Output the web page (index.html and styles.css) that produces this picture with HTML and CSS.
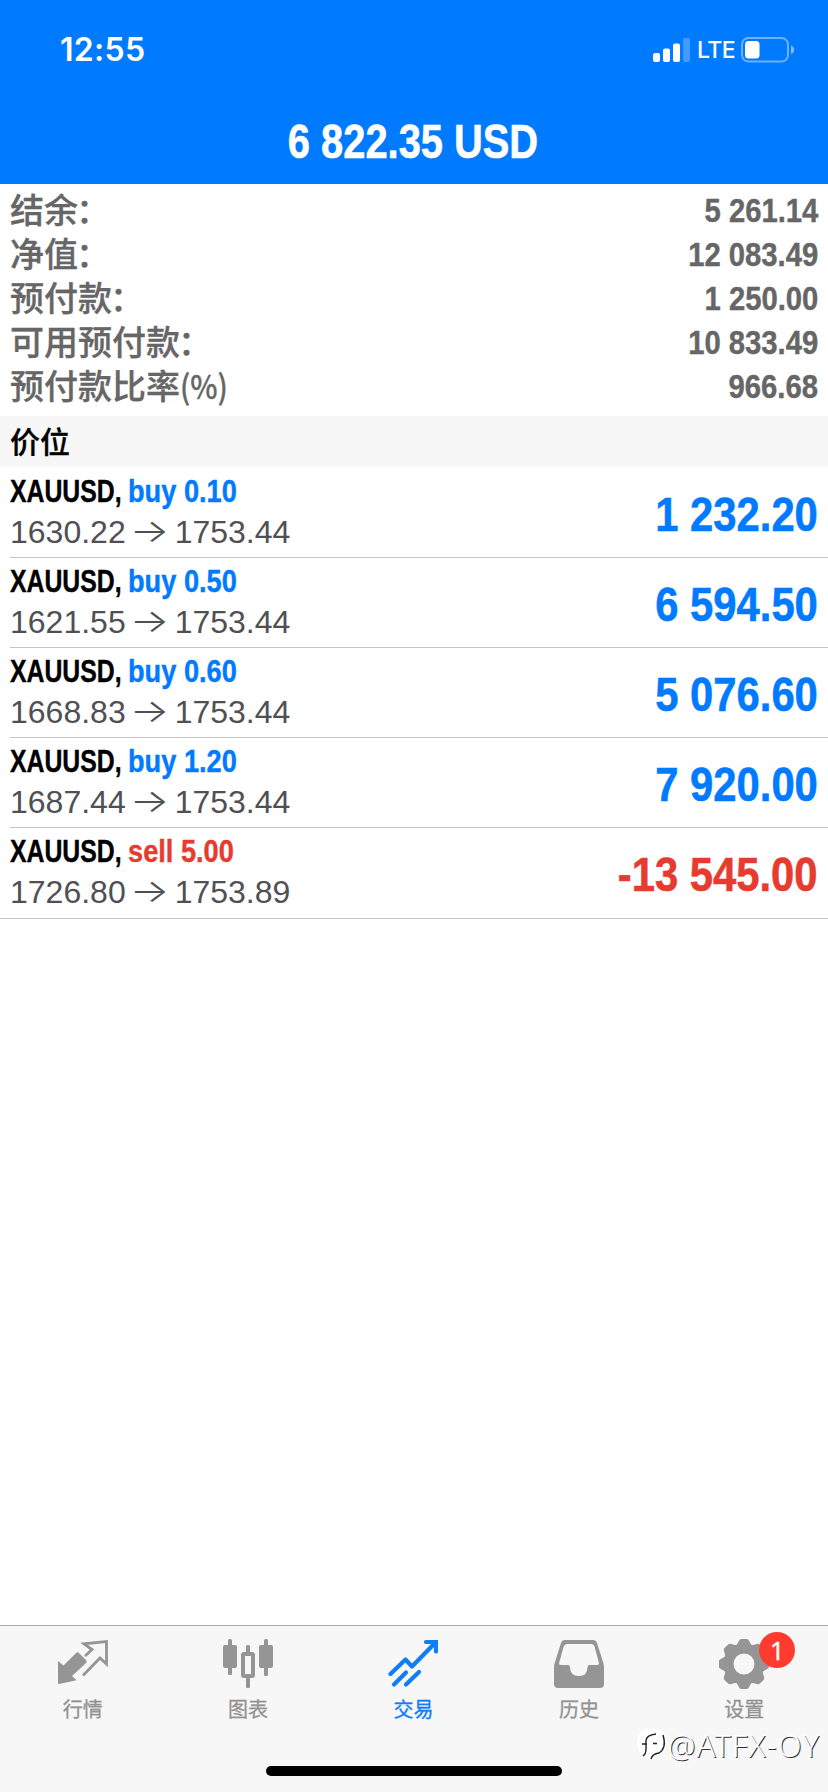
FILE: index.html
```html
<!DOCTYPE html>
<html lang="zh-CN">
<head>
<meta charset="utf-8">
<title>交易</title>
<link rel="stylesheet" href="styles.css">
</head>
<body>
<div class="screen">
  <header class="header">
    <div class="status">
      <span class="time">12:55</span>
      <div class="status-right">
        <svg class="signal" viewBox="0 0 38 24" width="38" height="24" fill="#fff">
          <rect x="0" y="15" width="7" height="9" rx="2"/>
          <rect x="10" y="10.500" width="7" height="13.500" rx="2"/>
          <rect x="20" y="5.500" width="7" height="18.500" rx="2"/>
          <rect x="30" y="0" width="7" height="24" rx="2" opacity=".25"/>
        </svg>
        <span class="lte">LTE</span>
        <svg class="battery" viewBox="0 0 54 26" width="54" height="26">
          <rect x="1" y="1" width="46" height="23.500" rx="6.500" fill="none" stroke="#fff" stroke-opacity=".42" stroke-width="2"/>
          <rect x="4" y="4" width="14.500" height="17.500" rx="3.500" fill="#fff"/>
          <path d="M50 8.500q3.200 1.200 3.200 4.300t-3.200 4.300z" fill="#fff" opacity=".5"/>
        </svg>
      </div>
    </div>
    <h1 class="title">6 822.35 USD</h1>
  </header>

  <dl class="summary">
    <div class="line"><dt>结余<span class="colon">：</span></dt><dd>5 261.14</dd></div>
    <div class="line"><dt>净值<span class="colon">：</span></dt><dd>12 083.49</dd></div>
    <div class="line"><dt>预付款<span class="colon">：</span></dt><dd>1 250.00</dd></div>
    <div class="line"><dt>可用预付款<span class="colon">：</span></dt><dd>10 833.49</dd></div>
    <div class="line"><dt>预付款比率<span class="paren">(%)</span></dt><dd>966.68</dd></div>
  </dl>

  <h2 class="section">价位</h2>

  <main class="positions">
    <div class="position">
      <div class="info">
        <div class="deal"><span class="symbol">XAUUSD,</span><span class="side buy">buy 0.10</span></div>
        <div class="prices"><span>1630.22</span><span class="arrow">→</span><span>1753.44</span></div>
      </div>
      <div class="profit buy">1 232.20</div>
    </div>
    <div class="position">
      <div class="info">
        <div class="deal"><span class="symbol">XAUUSD,</span><span class="side buy">buy 0.50</span></div>
        <div class="prices"><span>1621.55</span><span class="arrow">→</span><span>1753.44</span></div>
      </div>
      <div class="profit buy">6 594.50</div>
    </div>
    <div class="position">
      <div class="info">
        <div class="deal"><span class="symbol">XAUUSD,</span><span class="side buy">buy 0.60</span></div>
        <div class="prices"><span>1668.83</span><span class="arrow">→</span><span>1753.44</span></div>
      </div>
      <div class="profit buy">5 076.60</div>
    </div>
    <div class="position">
      <div class="info">
        <div class="deal"><span class="symbol">XAUUSD,</span><span class="side buy">buy 1.20</span></div>
        <div class="prices"><span>1687.44</span><span class="arrow">→</span><span>1753.44</span></div>
      </div>
      <div class="profit buy">7 920.00</div>
    </div>
    <div class="position">
      <div class="info">
        <div class="deal"><span class="symbol">XAUUSD,</span><span class="side sell">sell 5.00</span></div>
        <div class="prices"><span>1726.80</span><span class="arrow">→</span><span>1753.89</span></div>
      </div>
      <div class="profit sell">-13 545.00</div>
    </div>
  </main>

  <footer class="footer">
    <nav class="tabs">
      <div class="tab">
        <svg viewBox="0 0 50 50" width="50" height="50">
          <path d="M0 18.500L5.500 23L18 10.500q1.500-1.500 3 0l7 7q1.500 1.500 0 3L14 33.500l4.500 4.300L1 41.500q-1 0-1-1z" transform="translate(0 3.500)" fill="#959595"/>
          <path d="M27 17L34 10.500L26 4.800L48.500 2.500V25L42 19L25 36.500" fill="none" stroke="#959595" stroke-width="2.800"/>
        </svg>
        <span>行情</span>
      </div>
      <div class="tab">
        <svg viewBox="0 0 50 50" width="50" height="50" fill="#959595">
          <rect x="5" y="0" width="4" height="36" rx="1.500"/><rect x="0" y="6" width="14" height="23" rx="2"/>
          <rect x="41" y="0" width="4" height="37" rx="1.500"/><rect x="36" y="6" width="14" height="23" rx="2"/>
          <rect x="23" y="6" width="4" height="9" rx="1.500"/><rect x="23" y="37" width="4" height="12" rx="1.500"/>
          <rect x="20" y="15" width="10" height="22" rx="1" fill="none" stroke="#959595" stroke-width="4"/>
        </svg>
        <span>图表</span>
      </div>
      <div class="tab active">
        <svg viewBox="0 0 50 50" width="50" height="50" fill="none" stroke="#0e7dfa" stroke-width="4.200" stroke-linecap="round" stroke-linejoin="round">
          <path d="M2.500 35L17.500 20.500L24 27.500L47 4"/>
          <path d="M38 3h10v9.500" stroke-linejoin="miter"/>
          <path d="M6 45.500L18 33.500M18 45.500L31 33"/>
        </svg>
        <span>交易</span>
      </div>
      <div class="tab">
        <svg viewBox="0 0 50 50" width="50" height="50">
          <path fill="#959595" fill-rule="evenodd" d="M11 1H39Q42 1 43 4L49 23Q50 26 50 28V45Q50 49 46 49H4Q0 49 0 45V28Q0 26 1 23L7 4Q8 1 11 1ZM13 5Q10.500 5 9.700 7.500L5.200 23.500Q4.700 26 7 26H14Q16 26 16 28Q16 37 25 37Q33.500 37 33.500 28Q33.500 26 35.500 26H43Q45.300 26 44.800 23.500L40.500 7.500Q40 5 37.500 5Z"/>
        </svg>
        <span>历史</span>
      </div>
      <div class="tab">
        <div class="gear">
          <svg viewBox="0 0 50 50" width="50" height="50">
            <g fill="#959595">
              <circle cx="25" cy="25" r="20.500"/>
              <path id="tooth" d="M17 7L20.500 1Q21 0 22.500 0H27.500Q29 0 29.500 1L33 7L25 14Z"/>
              <use href="#tooth" transform="rotate(45 25 25)"/>
              <use href="#tooth" transform="rotate(90 25 25)"/>
              <use href="#tooth" transform="rotate(135 25 25)"/>
              <use href="#tooth" transform="rotate(180 25 25)"/>
              <use href="#tooth" transform="rotate(225 25 25)"/>
              <use href="#tooth" transform="rotate(270 25 25)"/>
              <use href="#tooth" transform="rotate(315 25 25)"/>
            </g>
            <circle cx="25" cy="25" r="10.500" fill="#f7f7f7"/>
          </svg>
          <span class="badge">1</span>
        </div>
        <span>设置</span>
      </div>
    </nav>
    <div class="home"></div>
    <div class="watermark">
      <svg viewBox="0 0 32 34" width="32" height="34">
        <path d="M9 1H22Q30 3 30 14Q30 25 16 31Q1 27 1 15Q1 4 9 1Z" fill="#fff"/>
        <path d="M6 16H11M7 28Q10 26 10 21V13Q10 7 20 6M17 15.500H21M27 7Q31 20 23 25Q16 26 15 31" fill="none" stroke="#222" stroke-width="1.400"/>
      </svg>
      <span class="handle">@ATFX-OY</span>
    </div>
  </footer>
</div>
</body>
</html>
```
FILE: styles.css
```css
* { box-sizing: border-box; margin: 0; padding: 0; }

body {
  background: #fff;
  font-family: "Liberation Sans", "Noto Sans CJK SC", sans-serif;
}

.screen {
  width: 828px;
  height: 1792px;
  display: flex;
  flex-direction: column;
  overflow: hidden;
}

.header {
  height: 184px;
  flex: none;
  background: #007aff;
  color: #fff;
}

.status {
  display: flex;
  justify-content: space-between;
  align-items: center;
  height: 100px;
  padding: 0 33px 0 60px;
}

.time {
  font: 600 32px/40px Inter, sans-serif;
  letter-spacing: .3px;
}

.status-right { display: flex; align-items: center; }

.lte {
  width: 50px;
  padding-left: 6px;
  font: 500 23px/26px Inter, sans-serif;
  letter-spacing: -.6px;
}

.title {
  font-size: 48px;
  line-height: 84px;
  text-align: center;
  transform: translateX(-1px) scaleX(.83);
  -webkit-text-stroke: .6px currentColor;
}

.summary { flex: none; height: 232px; padding: 4px 10px 0; }

.line {
  display: flex;
  justify-content: space-between;
  height: 44px;
  color: #666;
  line-height: 44px;
}

.line dt {
  font-family: "Noto Sans CJK SC", sans-serif;
  font-weight: 500;
  font-size: 34px;
  line-height: 42px;
  -webkit-text-stroke: .3px currentColor;
}

.colon { margin-left: -2px; }

.paren {
  display: inline-block;
  font-size: 33px;
  transform: scaleX(.88);
  transform-origin: left;
}

.line dd {
  font-size: 34px;
  font-weight: 700;
  transform: scaleX(.86);
  transform-origin: right;
  -webkit-text-stroke: .4px currentColor;
}

.section {
  flex: none;
  height: 51px;
  padding-left: 10px;
  background: #f7f7f7;
  color: #000;
  font: 500 30px/49px "Noto Sans CJK SC", sans-serif;
  -webkit-text-stroke: .3px currentColor;
}

.positions { flex: 1; }

.position {
  display: flex;
  justify-content: space-between;
  height: 90px;
  margin-left: 10px;
  padding-right: 10px;
  border-bottom: 1px solid #c4c4c6;
}

.position:first-child { height: 91px; }

.position:last-child {
  height: 91px;
  margin-left: 0;
  padding-left: 10px;
}

.position + .position .deal { height: 45px; line-height: 46px; }
.position + .position .profit { line-height: 93px; }

.deal {
  display: flex;
  height: 46px;
  font-size: 32px;
  font-weight: 700;
  line-height: 48px;
  -webkit-text-stroke: .4px currentColor;
}

.symbol {
  width: 118px;
  color: #000;
  transform: scaleX(.775);
  transform-origin: left;
}

.side { transform: scaleX(.85); transform-origin: left; }

.buy { color: #007aff; }
.sell { color: #e63b2e; }

.prices {
  display: flex;
  color: #505054;
  font-size: 32px;
  line-height: 38px;
}

.arrow {
  width: 49px;
  text-align: center;
  font-family: Inter, sans-serif;
  font-weight: 300;
  transform: translate(-1px, -1px) scaleX(1.3);
}

.profit {
  font-size: 48px;
  font-weight: 700;
  line-height: 95px;
  white-space: nowrap;
  transform: scaleX(.87);
  transform-origin: right;
  -webkit-text-stroke: .6px currentColor;
}

.footer {
  position: relative;
  flex: none;
  height: 167px;
  background: #f7f7f7;
  border-top: 1px solid #a9a9a9;
}

.tabs {
  display: grid;
  grid-template-columns: repeat(5, 1fr);
  padding: 13px 1px 0 0;
}

.tab {
  display: flex;
  flex-direction: column;
  align-items: center;
  gap: 5px;
  color: #929292;
  font: 400 20px/30px "Noto Sans CJK SC", sans-serif;
  -webkit-text-stroke: .3px currentColor;
}

.tab svg { display: block; }
.active { color: #0e7dfa; }
.gear { position: relative; }

.badge {
  position: absolute;
  left: 40px;
  top: -7px;
  width: 36px;
  height: 36px;
  border-radius: 50%;
  background: #ff3b30;
  color: #fff;
  font: 400 26px/36px "Noto Sans", sans-serif;
  text-align: center;
}

.home {
  position: absolute;
  left: 266px;
  bottom: 16px;
  width: 296px;
  height: 10px;
  border-radius: 5px;
  background: #000;
}

.watermark {
  position: absolute;
  right: 8px;
  bottom: 29px;
  display: flex;
  align-items: center;
  color: #fff;
  font: 300 31px/36px "Noto Sans", sans-serif;
  text-shadow: 1px 1px 0 #333;
}

.handle { letter-spacing: 1.1px; }
```
